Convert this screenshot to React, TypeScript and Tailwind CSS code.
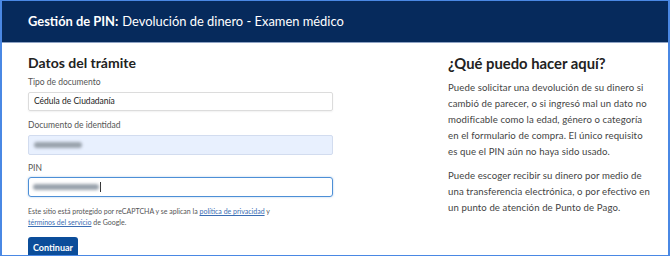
import React from "react";

const font = { fontFamily: "Lato, 'Open Sans', sans-serif" };

function Blur({ w }: { w: number }) {
  return (
    <span
      className="inline-block h-[6px] rounded-sm bg-[#9aa3ad] blur-[1.5px]"
      style={{ width: w }}
    />
  );
}

export default function App() {
  return (
    <div
      className="w-[670px] h-[256px] overflow-hidden bg-white border-t border-b border-l-2 border-r-2 border-[#4a88e4] flex flex-col text-[#333]"
      style={font}
    >
      <div className="h-[42px] shrink-0 bg-[#062a5c] border-b border-[#8fa3c4] flex items-center pl-[26px] text-white text-[12.9px]">
        <span className="font-bold">Gestión de PIN:</span>
        <span className="ml-[4px]">Devolución de dinero - Examen médico</span>
      </div>
      <div className="flex pl-[26px] pt-[11px]">
        <div className="w-[305px] shrink-0 flex flex-col">
          <h2 className="text-[14px] font-bold text-[#222] leading-[18px]">Datos del trámite</h2>
          <label className="mt-[5px] text-[8.5px] text-[#555] leading-[11px]">Tipo de documento</label>
          <div className="mt-[4px] h-[19px] border border-[#dcdcdc] rounded-[2px] shadow-[0_1px_2px_rgba(0,0,0,0.06)] flex items-center pl-[5px] text-[8.5px] text-[#222]">
            Cédula de Ciudadanía
          </div>
          <label className="mt-[9px] text-[8.5px] text-[#555] leading-[11px]">Documento de identidad</label>
          <div className="mt-[4px] h-[20px] border border-[#d2dcef] bg-[#e8f0fe] rounded-[2px] flex items-center pl-[5px]">
            <Blur w={48} />
          </div>
          <label className="mt-[8px] text-[8.5px] text-[#555] leading-[11px]">PIN</label>
          <div className="mt-[3px] h-[20px] border-[1.5px] border-[#4d8fd6] rounded-[3px] shadow-[0_0_2px_rgba(77,143,214,0.5)] flex items-center pl-[4px]">
            <Blur w={66} />
            <span className="w-px h-[10px] bg-[#333] ml-[1px]" />
          </div>
          <p className="mt-[9px] text-[7px] leading-[11px] text-[#555]">
            Este sitio está protegido por reCAPTCHA y se aplican la{" "}
            <span className="text-[#3a6db3] underline">política de privacidad</span> y
            <br />
            <span className="text-[#3a6db3] underline">términos del servicio</span> de Google.
          </p>
          <div className="mt-[9px] self-start h-[22px] px-[5px] bg-[#0b4d9a] rounded-[3px] text-white text-[9px] font-bold flex items-center">
            Continuar
          </div>
        </div>
        <div className="ml-[115px] w-[210px] shrink-0 flex flex-col">
          <h2 className="text-[14.8px] font-bold text-[#222] leading-[18px]">¿Qué puedo hacer aquí?</h2>
          <p className="mt-[8px] text-[9.6px] leading-[16px] text-[#444] tracking-[0.1px]">
            Puede solicitar una devolución de su dinero si
            <br />
            cambió de parecer, o si ingresó mal un dato no
            <br />
            modificable como la edad, género o categoría
            <br />
            en el formulario de compra. El único requisito
            <br />
            es que el PIN aún no haya sido usado.
          </p>
          <p className="mt-[8px] text-[9.6px] leading-[16px] text-[#444] tracking-[0.1px]">
            Puede escoger recibir su dinero por medio de
            <br />
            una transferencia electrónica, o por efectivo en
            <br />
            un punto de atención de Punto de Pago.
          </p>
        </div>
      </div>
    </div>
  );
}
